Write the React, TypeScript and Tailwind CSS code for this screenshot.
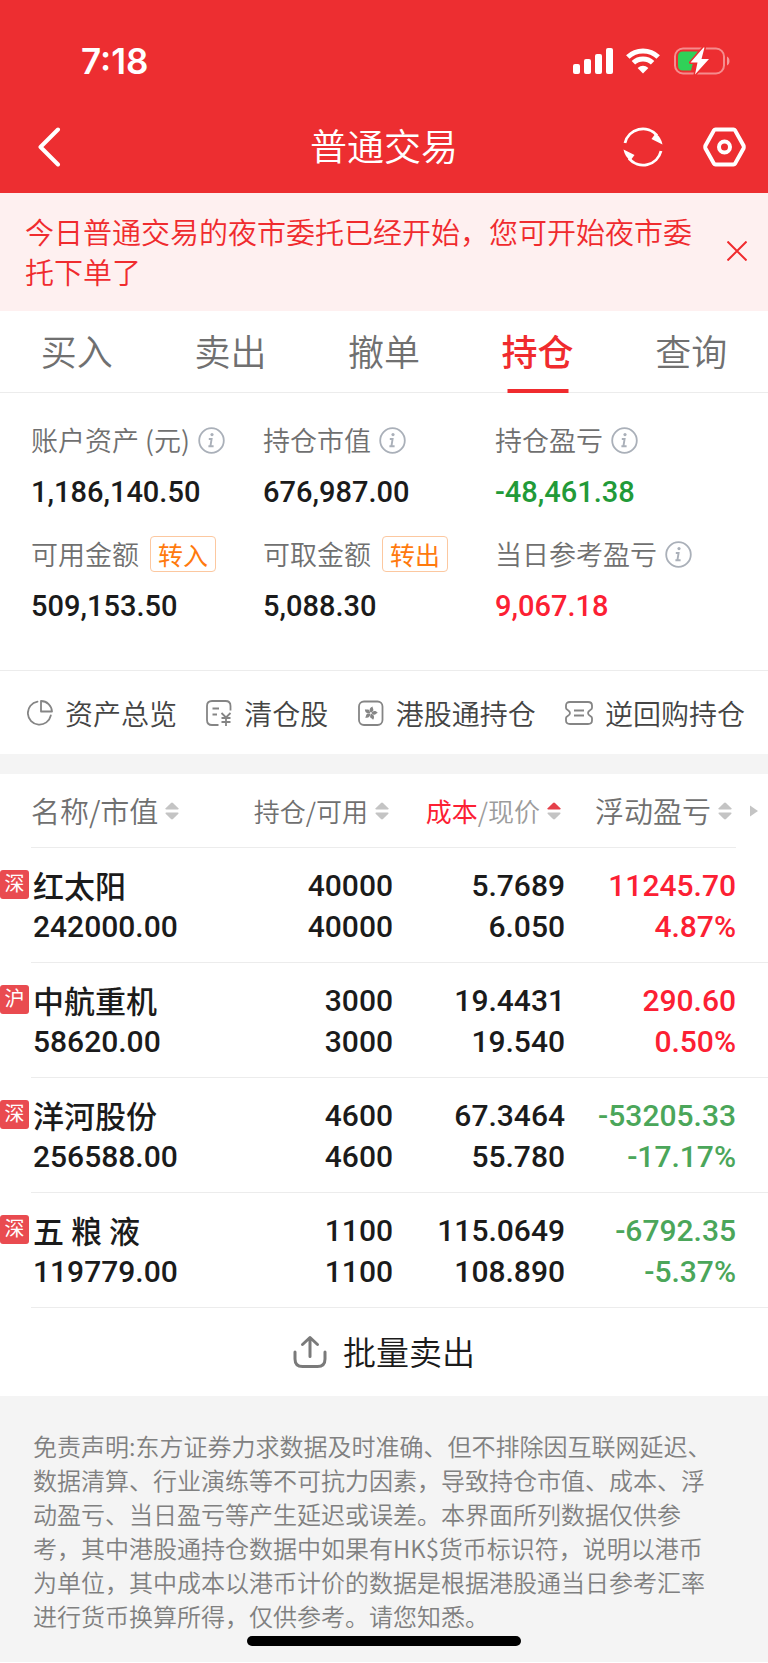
import { useState } from "react";
import type { ReactNode } from "react";

interface Holding {
  market: string;
  name: string;
  value: string;
  amount: string;
  available: string;
  cost: string;
  price: string;
  profit: string;
  rate: string;
}

const holdings: Holding[] = [
  {
    market: "深",
    name: "红太阳",
    value: "242000.00",
    amount: "40000",
    available: "40000",
    cost: "5.7689",
    price: "6.050",
    profit: "11245.70",
    rate: "4.87%",
  },
  {
    market: "沪",
    name: "中航重机",
    value: "58620.00",
    amount: "3000",
    available: "3000",
    cost: "19.4431",
    price: "19.540",
    profit: "290.60",
    rate: "0.50%",
  },
  {
    market: "深",
    name: "洋河股份",
    value: "256588.00",
    amount: "4600",
    available: "4600",
    cost: "67.3464",
    price: "55.780",
    profit: "-53205.33",
    rate: "-17.17%",
  },
  {
    market: "深",
    name: "五 粮 液",
    value: "119779.00",
    amount: "1100",
    available: "1100",
    cost: "115.0649",
    price: "108.890",
    profit: "-6792.35",
    rate: "-5.37%",
  },
];

const tabs = ["买入", "卖出", "撤单", "持仓", "查询"];

function StatusIcons() {
  return (
    <div className="flex items-center">
      <svg width="40" height="26" viewBox="0 0 40 26" fill="#fff">
        <rect x="0" y="16" width="7" height="10" rx="2" />
        <rect x="11" y="11" width="7" height="15" rx="2" />
        <rect x="22" y="6" width="7" height="20" rx="2" />
        <rect x="33" y="0" width="7" height="26" rx="2" />
      </svg>
      <svg className="ml-[13px]" width="34" height="26" viewBox="0 0 34 26" fill="none" stroke="#fff">
        <path d="M1.8 9A22 22 0 0 1 32.2 9" strokeWidth="5" />
        <path d="M7.4 14.8A14 14 0 0 1 26.6 14.8" strokeWidth="5" />
        <path d="M17 25.5L11.6 20Q17 15.6 22.4 20Z" fill="#fff" stroke="none" />
      </svg>
      <svg className="ml-[14px]" width="56" height="28" viewBox="0 0 56 28" fill="none">
        <rect x="1" y="1.5" width="49" height="25" rx="8" stroke="#fff" strokeOpacity="0.45" strokeWidth="2" />
        <path d="M53 9.5C56.3 11 56.3 17 53 18.5Z" fill="#fff" fillOpacity="0.5" />
        <path d="M9 4.5H24L16 16H19L17 23.5H9Q4 23.5 4 18.5V9.5Q4 4.5 9 4.5Z" fill="#30d158" />
        <path
          d="M29.5 0.5L16.5 15.5H23.5L21 27.5L35 12H27.5L30.5 0.5Z"
          fill="#fff"
          stroke="#ed2e31"
          strokeWidth="3"
          paintOrder="stroke"
          strokeLinejoin="round"
        />
      </svg>
    </div>
  );
}

function InfoIcon() {
  return (
    <svg width="27" height="27" viewBox="0 0 27 27" fill="none" stroke="#aab0b9" strokeWidth="2">
      <circle cx="13.5" cy="13.5" r="12.3" strokeWidth="1.8" />
      <circle cx="14" cy="7.6" r="1.6" fill="#aab0b9" stroke="none" />
      <path d="M10.8 12H13.6L12.4 19.3H15.6M10.4 19.3H13" strokeWidth="1.9" />
    </svg>
  );
}

function SortIcon({ active = false }: { active?: boolean }) {
  return (
    <svg width="14" height="18" viewBox="0 0 14 18">
      <path d="M6 0.9Q7 0 8 0.9L13.4 6.2Q13.8 7.4 12.8 7.4H1.2Q0.2 7.4 0.6 6.2Z" fill={active ? "#e5404a" : "#c4c4c4"} />
      <path d="M6 17.1Q7 18 8 17.1L13.4 11.8Q13.8 10.6 12.8 10.6H1.2Q0.2 10.6 0.6 11.8Z" fill="#c4c4c4" />
    </svg>
  );
}

function PieIcon() {
  return (
    <svg width="26" height="26" viewBox="0 0 26 26" fill="none" stroke="#858585" strokeWidth="1.8">
      <path d="M10.5 1.6A11.6 11.6 0 1 0 23.8 15.5" strokeLinecap="round" />
      <path d="M14 1V11.5H25A11 11 0 0 0 14 1Z" strokeLinejoin="round" />
    </svg>
  );
}

function ClearedIcon() {
  return (
    <svg width="26" height="26" viewBox="0 0 26 26" fill="none" stroke="#858585" strokeWidth="1.8">
      <path d="M12.5 25H6Q1 25 1 20V6Q1 1 6 1H19.5Q24.5 1 24.5 6V10.5" />
      <path d="M6.5 8.5H13M6.5 14.5H11" />
      <path d="M15.5 13L20 17.5L24.5 13M20 17.5V26M15.5 18H24.5M15.5 22H24.5" />
    </svg>
  );
}

function HongKongIcon() {
  return (
    <svg width="26" height="26" viewBox="0 0 26 26" fill="none" stroke="#858585" strokeWidth="1.8">
      <rect x="1" y="1.5" width="23.5" height="23.5" rx="5" />
      <g fill="#858585" stroke="none">
        {[10, 82, 154, 226, 298].map((angle) => (
          <path
            key={angle}
            d="M12.7 12.6C10.2 10.6 10.7 7.6 13.5 6.2C13.2 7.8 15.8 9 14.4 11C13.9 11.8 13.3 12 12.7 12.6Z"
            transform={`rotate(${angle} 12.7 13.2)`}
          />
        ))}
      </g>
    </svg>
  );
}

function TicketIcon() {
  return (
    <svg width="28" height="24" viewBox="0 0 28 24" fill="none" stroke="#858585" strokeWidth="1.8">
      <path
        d="M5 1H23Q27 1 27 4.5V7C27 9 23 9 23 12C23 15 27 15 27 17V19.5Q27 23 23 23H5Q1 23 1 19.5V17C1 15 5 15 5 12C5 9 1 9 1 7V4.5Q1 1 5 1Z"
        strokeLinejoin="round"
      />
      <path d="M9 9.5H19M9 14.5H19" />
    </svg>
  );
}

function SummaryItem({
  label,
  value,
  color = "text-[#1b1b1b]",
  children,
}: {
  label: string;
  value: string;
  color?: string;
  children: ReactNode;
}) {
  return (
    <div>
      <dt className="flex h-9 items-center gap-2 text-[27px] whitespace-nowrap text-[#707070]">
        {label}
        {children}
      </dt>
      <dd className={`mt-4 font-[Roboto] text-[29px] leading-9 font-medium ${color}`}>{value}</dd>
    </div>
  );
}

function InfoButton({ label }: { label: string }) {
  return (
    <button type="button" aria-label={`${label}说明`}>
      <InfoIcon />
    </button>
  );
}

function TransferButton({ children }: { children: ReactNode }) {
  return (
    <button
      type="button"
      className="ml-[3px] h-9 rounded-[4px] border border-[#fcc8a0] px-[7px] text-[25px] leading-8 font-normal text-[#ff7a0e]"
    >
      {children}
    </button>
  );
}

export default function App() {
  const [tab, setTab] = useState("持仓");
  const [showNotice, setShowNotice] = useState(true);

  return (
    <div className="w-full bg-white font-['Noto_Sans_CJK_SC',sans-serif] font-[350] text-[#1b1b1b]">
      {/* 顶部栏 */}
      <header className="bg-[#ed2e31] pt-[41px] text-white">
        <div className="flex h-10 items-center justify-between pr-[38px] pl-[81px]">
          <span className="font-[Inter] text-[35px] font-semibold">7:18</span>
          <StatusIcons />
        </div>
        <div className="mt-5 grid h-[92px] grid-cols-[1fr_auto_1fr] items-center px-[22px]">
          <button type="button" aria-label="返回" className="justify-self-start pl-4">
            <svg width="24" height="40" viewBox="0 0 24 40" fill="none" stroke="#fff" strokeWidth="4">
              <path d="M20 2.5L2.5 20L20 37.5" strokeLinecap="round" strokeLinejoin="round" />
            </svg>
          </button>
          <h1 className="pb-[2px] text-[37px] font-[350]">普通交易</h1>
          <div className="flex items-center gap-10 justify-self-end">
            <button type="button" aria-label="刷新">
              <svg width="40" height="40" viewBox="0 0 40 40" fill="none" stroke="#fff" strokeWidth="2.8">
                <path d="M2 16A18.4 18.4 0 0 1 34 8.5" />
                <path d="M38 24A18.4 18.4 0 0 1 6 31.5" />
                <path d="M39.5 17.5L28.5 12L32.5 6.5Q38 10 39.5 17.5Z" fill="#fff" stroke="none" />
                <path d="M0.5 22.5L11.5 28L7.5 33.5Q2 30 0.5 22.5Z" fill="#fff" stroke="none" />
              </svg>
            </button>
            <button type="button" aria-label="设置">
              <svg width="43" height="40" viewBox="0 0 43 40" fill="none" stroke="#fff" strokeWidth="4">
                <path
                  d="M12.5 2.5H30.5Q31.5 2.5 32.2 3.6L40.5 18.5Q41 20 40.5 21.5L32.2 36.4Q31.5 37.5 30.5 37.5H12.5Q11.5 37.5 10.8 36.4L2.5 21.5Q2 20 2.5 18.5L10.8 3.6Q11.5 2.5 12.5 2.5Z"
                  strokeLinejoin="round"
                />
                <circle cx="21.5" cy="20" r="5.5" />
              </svg>
            </button>
          </div>
        </div>
      </header>

      {/* 夜市委托提示 */}
      {showNotice && (
        <div className="flex items-center justify-between bg-[#fef0f0] pt-[18px] pr-[21px] pb-5 pl-[25px] text-[#f02b2e]">
          <p className="max-w-[680px] text-[29px] leading-10">
            今日普通交易的夜市委托已经开始，您可开始夜市委托下单了
          </p>
          <button type="button" aria-label="关闭" onClick={() => setShowNotice(false)}>
            <svg width="20" height="20" viewBox="0 0 20 20" stroke="#f02b2e" strokeWidth="2">
              <path d="M0.5 0.5L19.5 19.5M19.5 0.5L0.5 19.5" />
            </svg>
          </button>
        </div>
      )}

      <nav className="grid h-[82px] grid-cols-5 border-b border-[#ececec]">
        {tabs.map((item) => (
          <button
            key={item}
            type="button"
            onClick={() => setTab(item)}
            className={`relative pb-[3px] text-[36px] ${
              tab === item ? "font-medium text-[#f02b2e]" : "font-[350] text-[#707070]"
            }`}
          >
            {item}
            {tab === item && (
              <span className="absolute -bottom-px left-1/2 h-1 w-[61px] -translate-x-1/2 bg-[#f02b2e]" />
            )}
          </button>
        ))}
      </nav>

      {/* 资产概况 */}
      <dl className="grid grid-cols-3 gap-y-[26px] border-b border-[#ececec] pt-[29px] pr-[41px] pb-[46px] pl-[31px]">
        <SummaryItem label="账户资产 (元)" value="1,186,140.50">
          <InfoButton label="账户资产" />
        </SummaryItem>
        <SummaryItem label="持仓市值" value="676,987.00">
          <InfoButton label="持仓市值" />
        </SummaryItem>
        <SummaryItem label="持仓盈亏" value="-48,461.38" color="text-[#229a38]">
          <InfoButton label="持仓盈亏" />
        </SummaryItem>
        <SummaryItem label="可用金额" value="509,153.50">
          <TransferButton>转入</TransferButton>
        </SummaryItem>
        <SummaryItem label="可取金额" value="5,088.30">
          <TransferButton>转出</TransferButton>
        </SummaryItem>
        <SummaryItem label="当日参考盈亏" value="9,067.18" color="text-[#fc2033]">
          <InfoButton label="当日参考盈亏" />
        </SummaryItem>
      </dl>

      <div className="flex h-[83px] items-center justify-between pr-[23px] pl-[27px] text-[28px] text-[#444]">
        <a href="#assets" className="flex items-center gap-3">
          <PieIcon />
          资产总览
        </a>
        <a href="#cleared" className="flex items-center gap-3">
          <ClearedIcon />
          清仓股
        </a>
        <a href="#hk" className="flex items-center gap-3">
          <HongKongIcon />
          港股通持仓
        </a>
        <a href="#repo" className="flex items-center gap-3">
          <TicketIcon />
          逆回购持仓
        </a>
      </div>

      <div className="h-5 bg-[#f4f4f4]" />

      {/* 持仓列表 */}
      <table className="w-full table-fixed border-separate border-spacing-0">
        <colgroup>
          <col className="w-[31px]" />
          <col />
          <col className="w-[172px]" />
          <col className="w-[172px]" />
          <col className="w-[171px]" />
          <col className="w-8" />
        </colgroup>
        <thead>
          <tr className="h-[74px] text-[#707070]">
            <td />
            <th className="border-b border-[#ececec] font-[350]">
              <button type="button" className="flex items-center gap-[7px] text-[29px]">
                名称/市值
                <SortIcon />
              </button>
            </th>
            <th className="border-b border-[#ececec] pr-1 font-[350]">
              <button type="button" className="ml-auto flex items-center gap-[7px] text-[26px]">
                持仓/可用
                <SortIcon />
              </button>
            </th>
            <th className="border-b border-[#ececec] pr-1 font-[350]">
              <button type="button" className="ml-auto flex items-center gap-[7px] text-[26px] text-[#9c9c9c]">
                <span>
                  <span className="font-normal text-[#fc2033]">成本</span>/现价
                </span>
                <SortIcon active />
              </button>
            </th>
            <th className="border-b border-[#ececec] pr-1 font-[350]">
              <button type="button" className="ml-auto flex items-center gap-[7px] text-[29px]">
                浮动盈亏
                <SortIcon />
              </button>
            </th>
            <td>
              <svg className="ml-[14px]" width="8" height="12" viewBox="0 0 8 12" fill="#c4c4c4">
                <path d="M0 0.5L8 6L0 11.5Z" />
              </svg>
            </td>
          </tr>
        </thead>
        <tbody className="font-[Roboto,'Noto_Sans_CJK_SC',sans-serif] text-[30px] leading-[41px] font-medium">
          {holdings.map((item) => {
            const color = item.profit.startsWith("-") ? "text-[#4ba65a]" : "text-[#fc2033]";
            return (
              <tr key={item.name} className="h-[115px] text-right">
                <td className="pt-[22px] align-top">
                  <span className="block size-[29px] rounded-[3px] bg-[#e94b50] text-center text-[20px] leading-[28px] font-normal text-white">
                    {item.market}
                  </span>
                </td>
                <td className="border-b border-[#ececec] pt-[17px] pb-[15px] pl-[2px] text-left whitespace-nowrap">
                  <div className="pb-[2px] font-['Noto_Sans_CJK_SC',sans-serif] text-[31px] leading-[39px]">
                    {item.name}
                  </div>
                  <div>{item.value}</div>
                </td>
                <td className="border-b border-[#ececec] pt-[17px] pb-[15px]">
                  <div>{item.amount}</div>
                  <div>{item.available}</div>
                </td>
                <td className="border-b border-[#ececec] pt-[17px] pb-[15px]">
                  <div>{item.cost}</div>
                  <div>{item.price}</div>
                </td>
                <td className={`border-b border-[#ececec] pt-[17px] pb-[15px] ${color}`}>
                  <div>{item.profit}</div>
                  <div>{item.rate}</div>
                </td>
                <td className="border-b border-[#ececec]" />
              </tr>
            );
          })}
        </tbody>
      </table>

      <button
        type="button"
        className="flex h-[88px] w-full items-center justify-center gap-4 text-[33px] font-[350]"
      >
        <svg width="34" height="34" viewBox="0 0 34 34" fill="none" stroke="#7a7a7a" strokeWidth="3" strokeLinecap="round">
          <path d="M2 17V24Q2 31.5 9.5 31.5H24.5Q32 31.5 32 24V17" />
          <path d="M17 21.5V2.5M9.5 9.5L17 2.5L24.5 9.5" strokeLinejoin="round" />
        </svg>
        批量卖出
      </button>

      {/* 免责声明 */}
      <footer className="bg-[#f4f4f4] pt-[33px] pb-4">
        <p className="pr-11 pl-[33px] text-[24px] leading-[34px] text-[#808080]">
          免责声明:东方证券力求数据及时准确、但不排除因互联网延迟、数据清算、行业演练等不可抗力因素，导致持仓市值、成本、浮动盈亏、当日盈亏等产生延迟或误差。本界面所列数据仅供参考，其中港股通持仓数据中如果有HK$货币标识符，说明以港币为单位，其中成本以港币计价的数据是根据港股通当日参考汇率进行货币换算所得，仅供参考。请您知悉。
        </p>
        <div className="mx-auto mt-[3px] h-[10px] w-[274px] rounded-full bg-black" />
      </footer>
    </div>
  );
}
